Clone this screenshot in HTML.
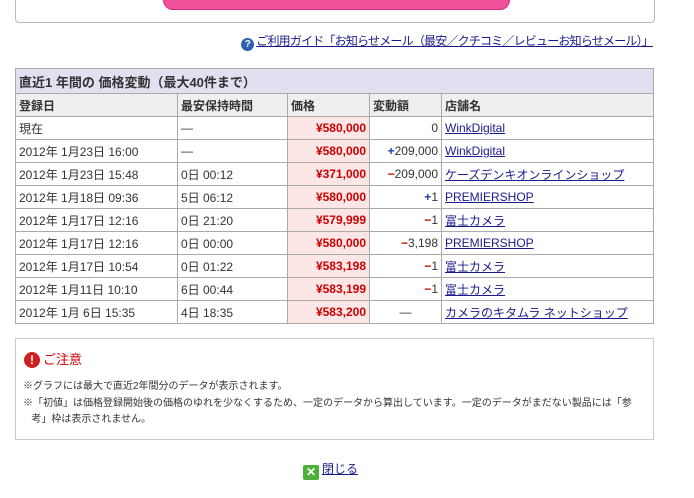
<!DOCTYPE html><html><head><meta charset="utf-8"><style>
body{margin:0;width:694px;height:498px;background:#fff;font-family:"Liberation Sans","Noto Sans CJK JP",sans-serif;font-size:12px;color:#333;position:relative;overflow:hidden}
.top{position:absolute;left:15px;top:-10px;width:638px;height:31px;border:1px solid #bbb;border-radius:4px}
.pink{position:absolute;left:163px;top:-12px;width:345px;height:20px;background:#f04f9a;border-radius:10px;border:1px solid #d03080}
.guide{position:absolute;right:41px;top:32px;font-size:12px;color:#1a1a8c;text-decoration:underline;letter-spacing:-0.8px}
.q{display:inline-block;width:13px;height:13px;border-radius:50%;background:#2f5fb0;color:#fff;font-size:10px;text-align:center;line-height:13px;font-weight:bold;vertical-align:-2px;margin-right:2px;text-decoration:none;letter-spacing:0}
table{position:absolute;left:15px;top:68px;border-collapse:collapse;width:639px;table-layout:fixed}
td,th{border:1px solid #aaa;height:22px;padding:0 3px;font-size:12px;font-weight:normal;text-align:left;white-space:nowrap;overflow:hidden}
.t th{background:#e0e0f0;height:24px;font-size:13px;font-weight:bold;color:#333}
.h th{background:#efefef;font-weight:bold}
.p{background:#fde6e6;color:#c00;font-weight:bold;text-align:right}
.r{text-align:right}
a{color:#1a1a8c;text-decoration:underline}
.bl{color:#1a3ab0;font-weight:bold}.rd{color:#c00;font-weight:bold}
.note{position:absolute;left:15px;top:338px;width:637px;height:100px;border:1px solid #ccc}
.note h4{margin:0;position:absolute;left:8px;top:10px;color:#c00;font-size:13px;font-weight:normal}
.ex{display:inline-block;width:16px;height:16px;border-radius:50%;background:#d02020;color:#fff;font-weight:bold;text-align:center;line-height:16px;font-size:12px;margin-right:3px}
.note p{margin:0;position:absolute;left:7px;font-size:10px;line-height:16px;color:#333}
.close{position:absolute;left:303px;top:460px;font-size:12px}
.x{display:inline-block;width:16px;height:15px;background:#4caf3a;color:#fff;font-weight:bold;text-align:center;line-height:15px;border-radius:2px;vertical-align:-3px;margin-right:3px}
</style></head><body>
<div class="top"></div><div class="pink"></div>
<div class="guide"><span class="q">?</span>ご利用ガイド「お知らせメール（最安／クチコミ／レビューお知らせメール）」</div>
<table>
<colgroup><col style="width:162px"><col style="width:110px"><col style="width:82px"><col style="width:72px"><col></colgroup>
<tr class="t"><th colspan="5">直近1 年間の 価格変動（最大40件まで）</th></tr>
<tr class="h"><th>登録日</th><th>最安保持時間</th><th>価格</th><th>変動額</th><th>店舗名</th></tr>
<tr><td>現在</td><td>―</td><td class="p">¥580,000</td><td class="r">0</td><td><a>WinkDigital</a></td></tr>
<tr><td>2012年 1月23日 16:00</td><td>―</td><td class="p">¥580,000</td><td class="r"><span class="bl">+</span>209,000</td><td><a>WinkDigital</a></td></tr>
<tr><td>2012年 1月23日 15:48</td><td>0日 00:12</td><td class="p">¥371,000</td><td class="r"><span class="rd">−</span>209,000</td><td><a>ケーズデンキオンラインショップ</a></td></tr>
<tr><td>2012年 1月18日 09:36</td><td>5日 06:12</td><td class="p">¥580,000</td><td class="r"><span class="bl">+</span>1</td><td><a>PREMIERSHOP</a></td></tr>
<tr><td>2012年 1月17日 12:16</td><td>0日 21:20</td><td class="p">¥579,999</td><td class="r"><span class="rd">−</span>1</td><td><a>富士カメラ</a></td></tr>
<tr><td>2012年 1月17日 12:16</td><td>0日 00:00</td><td class="p">¥580,000</td><td class="r"><span class="rd">−</span>3,198</td><td><a>PREMIERSHOP</a></td></tr>
<tr><td>2012年 1月17日 10:54</td><td>0日 01:22</td><td class="p">¥583,198</td><td class="r"><span class="rd">−</span>1</td><td><a>富士カメラ</a></td></tr>
<tr><td>2012年 1月11日 10:10</td><td>6日 00:44</td><td class="p">¥583,199</td><td class="r"><span class="rd">−</span>1</td><td><a>富士カメラ</a></td></tr>
<tr><td>2012年 1月 6日 15:35</td><td>4日 18:35</td><td class="p">¥583,200</td><td style="text-align:center">―</td><td><a>カメラのキタムラ ネットショップ</a></td></tr>
</table>
<div class="note"><h4><span class="ex">!</span>ご注意</h4>
<p style="top:40px">※グラフには最大で直近2年間分のデータが表示されます。</p>
<p style="top:57px">※「初値」は価格登録開始後の価格のゆれを少なくするため、一定のデータから算出しています。一定のデータがまだない製品には「参<br>&nbsp;&nbsp;&nbsp;考」枠は表示されません。</p>
</div>
<div class="close"><span class="x">✕</span><a>閉じる</a></div>
</body></html>
